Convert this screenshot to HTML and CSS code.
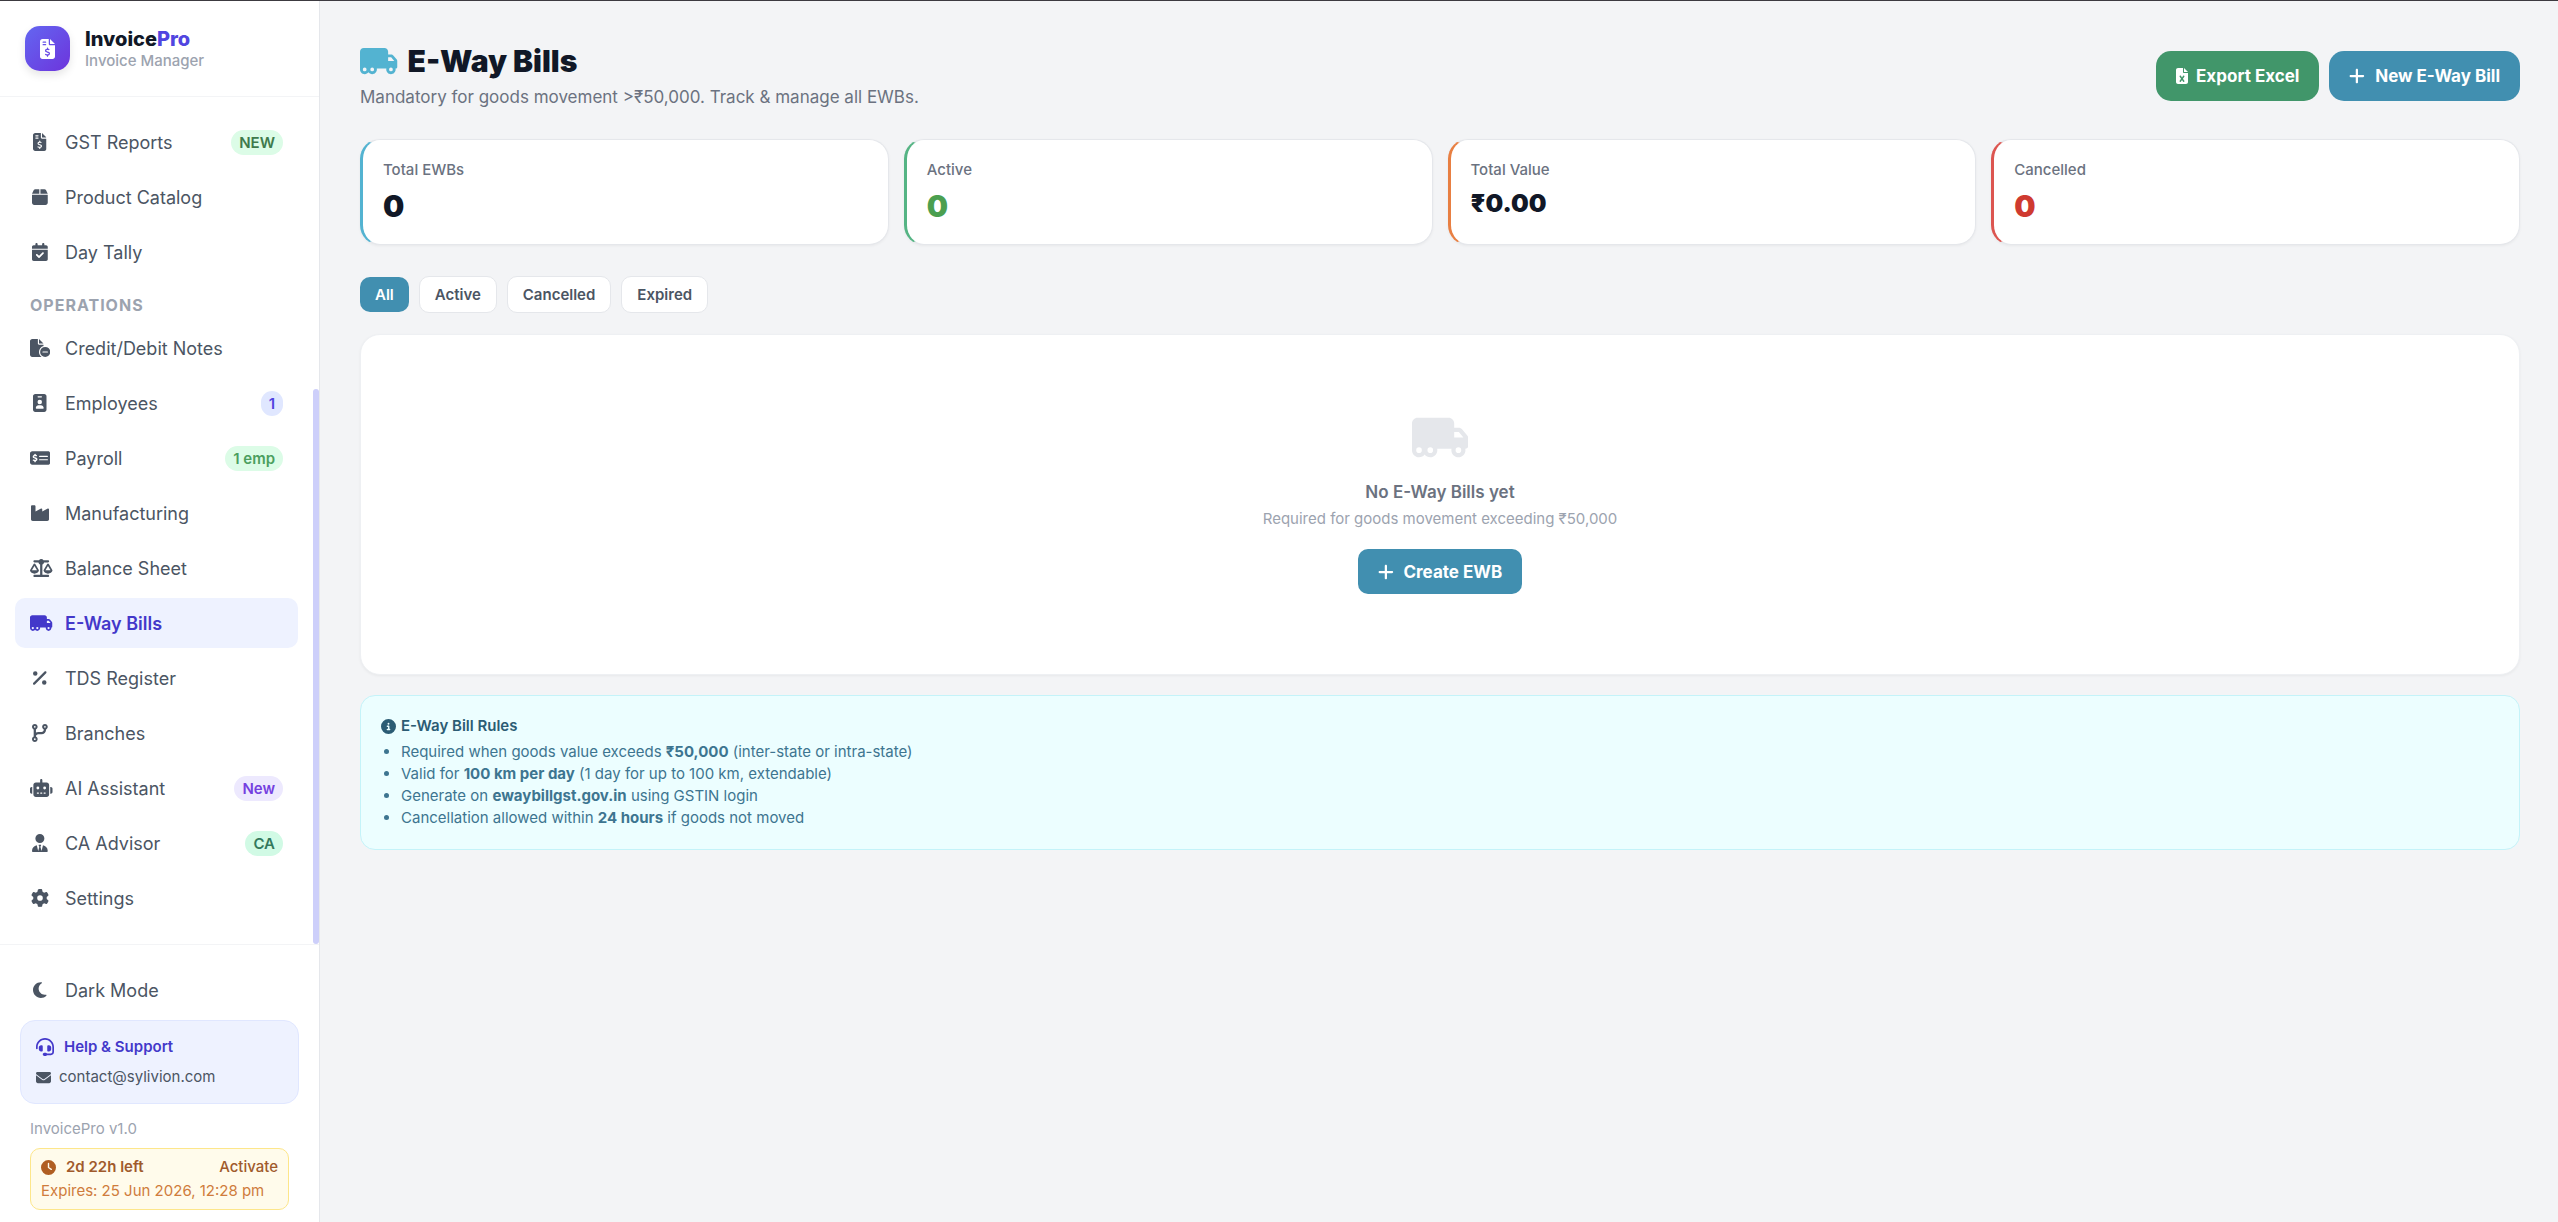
FILE: index.html
```html
<!DOCTYPE html>
<html lang="en">
<head>
    <meta charset="UTF-8">
    <meta name="viewport" content="width=device-width, initial-scale=1.0">
    <title>InvoicePro - E-Way Bills</title>
    <link rel="stylesheet" href="styles.css">
</head>
<body>
    <!-- Shared icons -->
    <svg class="sprite" aria-hidden="true">
        <symbol id="truck" viewBox="0 0 640 512"><path d="M64 32C28.7 32 0 60.7 0 96V304v80 16c0 44.2 35.8 80 80 80c26.2 0 49.4-12.6 64-32c14.6 19.4 37.8 32 64 32c44.2 0 80-35.8 80-80c0-5.5-.6-10.8-1.6-16H416h33.6c-1 5.2-1.6 10.5-1.6 16c0 44.2 35.8 80 80 80s80-35.8 80-80c0-5.5-.6-10.8-1.6-16H608c17.7 0 32-14.3 32-32V288 272 261.7c0-9.2-3.2-18.2-9-25.3l-58.8-71.8c-10.6-13-26.5-20.5-43.3-20.5H480V96c0-35.3-28.7-64-64-64H64zM585 256H480V192h48.8c2.4 0 4.7 1.1 6.2 2.9L585 256zM528 368a32 32 0 1 1 0 64 32 32 0 1 1 0-64zM176 400a32 32 0 1 1 64 0 32 32 0 1 1 -64 0zM80 368a32 32 0 1 1 0 64 32 32 0 1 1 0-64z"/></symbol>
        <symbol id="invoice" viewBox="0 0 384 512"><path d="M64 0C28.7 0 0 28.7 0 64V448c0 35.3 28.7 64 64 64H320c35.3 0 64-28.7 64-64V160H256c-17.7 0-32-14.3-32-32V0H64zM256 0V128H384L256 0zM64 80c0-8.8 7.2-16 16-16h64c8.8 0 16 7.2 16 16s-7.2 16-16 16H80c-8.8 0-16-7.2-16-16zm0 64c0-8.8 7.2-16 16-16h64c8.8 0 16 7.2 16 16s-7.2 16-16 16H80c-8.8 0-16-7.2-16-16zm128 72c8.8 0 16 7.2 16 16v17.3c8.5 1.2 16.7 3.1 24.1 5.1c8.5 2.3 13.6 11 11.3 19.6s-11 13.6-19.6 11.3c-11.1-3-22-5.2-32.1-5.3c-8.4-.1-17.4 1.8-23.6 5.5c-5.7 3.4-8.1 7.3-8.1 12.8c0 3.7 1.3 6.5 7.3 10.1c6.9 4.1 16.6 7.1 29.2 10.9l.5 .1c11.3 3.4 25.3 7.6 36.3 14.6c12.1 7.6 22.4 19.7 22.7 38.2c.3 19.3-9.6 33.3-22.9 41.6c-7.7 4.8-16.4 7.6-25.1 9.1V440c0 8.8-7.2 16-16 16s-16-7.2-16-16V422.2c-11.2-2.1-21.7-5.7-30.9-8.9c-2.1-.7-4.2-1.4-6.2-2.1c-8.4-2.8-12.9-11.9-10.1-20.2s11.9-12.9 20.2-10.1c2.5 .8 4.8 1.6 7.1 2.4c13.6 4.6 24.6 8.4 36.3 8.7c9.1 .3 17.9-1.7 23.7-5.3c5.1-3.2 7.9-7.3 7.8-14c-.1-4.6-1.8-7.8-7.7-11.6c-6.8-4.3-16.5-7.4-29-11.2l-1.6-.5c-11-3.3-24.3-7.3-34.8-13.7c-12-7.2-22.6-18.9-22.7-37.3c-.1-19.4 10.8-32.8 23.8-40.5c7.5-4.4 15.8-7.2 24.1-8.7V232c0-8.8 7.2-16 16-16z"/></symbol>
        <symbol id="plus" viewBox="0 0 448 512"><path d="M256 80c0-17.7-14.3-32-32-32s-32 14.3-32 32V224H48c-17.7 0-32 14.3-32 32s14.3 32 32 32H192V432c0 17.7 14.3 32 32 32s32-14.3 32-32V288H400c17.7 0 32-14.3 32-32s-14.3-32-32-32H256V80z"/></symbol>
    </svg>

    <div class="app">
        <aside class="sidebar">
            <div class="brand">
                <div class="brand-logo"><svg viewBox="0 0 384 512"><use href="#invoice"/></svg></div>
                <div>
                    <div class="brand-name">Invoice<span>Pro</span></div>
                    <div class="brand-sub">Invoice Manager</div>
                </div>
            </div>

            <nav class="nav">
                <a href="#" class="nav-item">
                    <span class="nav-icon"><svg viewBox="0 0 384 512"><use href="#invoice"/></svg></span>
                    GST Reports
                    <span class="badge badge-green-dark">NEW</span>
                </a>
                <a href="#" class="nav-item">
                    <span class="nav-icon"><svg viewBox="0 0 448 512"><path d="M50.7 58.5L0 160H208V32H93.7C75.5 32 58.9 42.3 50.7 58.5zM240 160H448L397.3 58.5C389.1 42.3 372.5 32 354.3 32H240V160zm208 32H0V416c0 35.3 28.7 64 64 64H384c35.3 0 64-28.7 64-64V192z"/></svg></span>
                    Product Catalog
                </a>
                <a href="#" class="nav-item">
                    <span class="nav-icon"><svg viewBox="0 0 448 512"><path d="M128 0c17.7 0 32 14.3 32 32V64H288V32c0-17.7 14.3-32 32-32s32 14.3 32 32V64h48c26.5 0 48 21.5 48 48v48H0V112C0 85.5 21.5 64 48 64H96V32c0-17.7 14.3-32 32-32zM0 192H448V464c0 26.5-21.5 48-48 48H48c-26.5 0-48-21.5-48-48V192zM329 305c9.4-9.4 9.4-24.6 0-33.9s-24.6-9.4-33.9 0l-95 95-47-47c-9.4-9.4-24.6-9.4-33.9 0s-9.4 24.6 0 33.9l64 64c9.4 9.4 24.6 9.4 33.9 0L329 305z"/></svg></span>
                    Day Tally
                </a>

                <div class="nav-label">Operations</div>

                <a href="#" class="nav-item">
                    <span class="nav-icon"><svg viewBox="0 0 576 512"><path d="M0 64C0 28.7 28.7 0 64 0H224V128c0 17.7 14.3 32 32 32H384v38.6C310.1 219.5 256 287.4 256 368c0 59.1 29.1 111.3 73.7 143.3c-3.2 .5-6.4 .7-9.7 .7H64c-35.3 0-64-28.7-64-64V64zm384 64H256V0L384 128zM288 368a144 144 0 1 1 288 0 144 144 0 1 1 -288 0zm224 0c0-8.8-7.2-16-16-16H368c-8.8 0-16 7.2-16 16s7.2 16 16 16H496c8.8 0 16-7.2 16-16z"/></svg></span>
                    Credit/Debit Notes
                </a>
                <a href="#" class="nav-item">
                    <span class="nav-icon"><svg viewBox="0 0 384 512"><path d="M64 0C28.7 0 0 28.7 0 64V448c0 35.3 28.7 64 64 64H320c35.3 0 64-28.7 64-64V64c0-35.3-28.7-64-64-64H64zm96 320h64c44.2 0 80 35.8 80 80c0 8.8-7.2 16-16 16H96c-8.8 0-16-7.2-16-16c0-44.2 35.8-80 80-80zm-32-96a64 64 0 1 1 128 0 64 64 0 1 1 -128 0zM144 64h96c8.8 0 16 7.2 16 16s-7.2 16-16 16H144c-8.8 0-16-7.2-16-16s7.2-16 16-16z"/></svg></span>
                    Employees
                    <span class="badge badge-indigo">1</span>
                </a>
                <a href="#" class="nav-item">
                    <span class="nav-icon"><svg viewBox="0 0 576 512"><path d="M64 64C28.7 64 0 92.7 0 128V384c0 35.3 28.7 64 64 64H512c35.3 0 64-28.7 64-64V128c0-35.3-28.7-64-64-64H64zM272 192H496c8.8 0 16 7.2 16 16s-7.2 16-16 16H272c-8.8 0-16-7.2-16-16s7.2-16 16-16zM256 304c0-8.8 7.2-16 16-16H496c8.8 0 16 7.2 16 16s-7.2 16-16 16H272c-8.8 0-16-7.2-16-16zM164 152v13.9c7.5 1.2 14.6 2.9 21.1 4.7c10.7 2.8 17 13.8 14.2 24.5s-13.8 17-24.5 14.2c-11-2.9-21.6-5-31.2-5.2c-7.9-.1-16 1.8-21.5 5c-4.8 2.8-6.2 5.6-6.2 9.3c0 1.8 .1 3.5 5.3 6.7c6.3 3.8 15.5 6.7 28.3 10.5l.7 .2c11.2 3.4 25.6 7.7 37.1 15c12.9 8.1 24.3 21.3 24.6 41.6c.3 20.9-10.5 36.1-24.8 45c-7.2 4.5-15.2 7.3-23.2 9V360c0 11-9 20-20 20s-20-9-20-20V345.4c-10.3-2.2-20-5.5-28.2-8.4c-2.1-.7-4.1-1.4-6.1-2.1c-10.5-3.5-16.1-14.8-12.6-25.3s14.8-16.1 25.3-12.6c2.5 .8 4.9 1.7 7.2 2.4c13.6 4.6 24 8.1 35.1 8.5c8.6 .3 16.5-1.6 21.4-4.7c4.1-2.5 6-5.5 5.9-10.5c0-2.9-.8-5-5.9-8.2c-6.3-4-15.4-6.9-28-10.7l-1.7-.5c-10.9-3.3-24.6-7.4-35.6-14c-12.7-7.7-24.6-20.5-24.7-40.7c-.1-21.1 11.8-35.7 25.8-43.9c6.9-4.1 14.5-6.8 22.2-8.5V152c0-11 9-20 20-20s20 9 20 20z"/></svg></span>
                    Payroll
                    <span class="badge badge-green">1 emp</span>
                </a>
                <a href="#" class="nav-item">
                    <span class="nav-icon"><svg viewBox="0 0 512 512"><path d="M32 32C14.3 32 0 46.3 0 64V304v48 80c0 26.5 21.5 48 48 48H464c26.5 0 48-21.5 48-48V304 152.2c0-18.2-19.4-29.7-35.4-21.1L320 215.4V152.2c0-18.2-19.4-29.7-35.4-21.1L128 215.4V64c0-17.7-14.3-32-32-32H32z"/></svg></span>
                    Manufacturing
                </a>
                <a href="#" class="nav-item">
                    <span class="nav-icon"><svg viewBox="0 0 640 512"><path d="M384 32H512c17.7 0 32 14.3 32 32s-14.3 32-32 32H398.4c-5.2 25.8-22.9 47.1-46.4 57.3V448H512c17.7 0 32 14.3 32 32s-14.3 32-32 32H320 128c-17.7 0-32-14.3-32-32s14.3-32 32-32H288V153.3c-23.5-10.3-41.2-31.6-46.4-57.3H128c-17.7 0-32-14.3-32-32s14.3-32 32-32H256c14.6-19.4 37.8-32 64-32s49.4 12.6 64 32zm55.6 288H584.4L512 195.8 439.6 320zM512 416c-62.9 0-115.2-34-126-78.9c-2.6-11 1-22.3 6.7-32.1l95.2-163.2c5-8.6 14.2-13.8 24.1-13.8s19.1 5.3 24.1 13.8l95.2 163.2c5.7 9.8 9.3 21.1 6.7 32.1C627.2 382 574.9 416 512 416zM126.8 195.8L54.4 320H199.3L126.8 195.8zM.9 337.1c-2.6-11 1-22.3 6.7-32.1l95.2-163.2c5-8.6 14.2-13.8 24.1-13.8s19.1 5.3 24.1 13.8l95.2 163.2c5.7 9.8 9.3 21.1 6.7 32.1C242 382 189.7 416 126.8 416S11.7 382 .9 337.1z"/></svg></span>
                    Balance Sheet
                </a>
                <a href="#" class="nav-item active">
                    <span class="nav-icon"><svg viewBox="0 0 640 512"><use href="#truck"/></svg></span>
                    E-Way Bills
                </a>
                <a href="#" class="nav-item">
                    <span class="nav-icon"><svg viewBox="0 0 384 512"><path d="M374.6 118.6c12.5-12.5 12.5-32.8 0-45.3s-32.8-12.5-45.3 0l-320 320c-12.5 12.5-12.5 32.8 0 45.3s32.8 12.5 45.3 0l320-320zM128 128A64 64 0 1 0 0 128a64 64 0 1 0 128 0zM384 384a64 64 0 1 0 -128 0 64 64 0 1 0 128 0z"/></svg></span>
                    TDS Register
                </a>
                <a href="#" class="nav-item">
                    <span class="nav-icon"><svg viewBox="0 0 448 512"><path d="M80 104a24 24 0 1 0 0-48 24 24 0 1 0 0 48zm80-24c0 32.8-19.7 61-48 73.3v87.8c18.8-10.9 40.7-17.1 64-17.1h96c35.3 0 64-28.7 64-64v-6.7C307.7 141 288 112.8 288 80c0-44.2 35.8-80 80-80s80 35.8 80 80c0 32.8-19.7 61-48 73.3V160c0 70.7-57.3 128-128 128H176c-35.3 0-64 28.7-64 64v6.7c28.3 12.3 48 40.5 48 73.3c0 44.2-35.8 80-80 80s-80-35.8-80-80c0-32.8 19.7-61 48-73.3V352 153.3C19.7 141 0 112.8 0 80C0 35.8 35.8 0 80 0s80 35.8 80 80zm232 0a24 24 0 1 0 -48 0 24 24 0 1 0 48 0zM80 456a24 24 0 1 0 0-48 24 24 0 1 0 0 48z"/></svg></span>
                    Branches
                </a>
                <a href="#" class="nav-item">
                    <span class="nav-icon"><svg viewBox="0 0 640 512"><path d="M320 0c17.7 0 32 14.3 32 32V96H472c39.8 0 72 32.2 72 72V440c0 39.8-32.2 72-72 72H168c-39.8 0-72-32.2-72-72V168c0-39.8 32.2-72 72-72H288V32c0-17.7 14.3-32 32-32zM208 384c-8.8 0-16 7.2-16 16s7.2 16 16 16h32c8.8 0 16-7.2 16-16s-7.2-16-16-16H208zm96 0c-8.8 0-16 7.2-16 16s7.2 16 16 16h32c8.8 0 16-7.2 16-16s-7.2-16-16-16H304zm96 0c-8.8 0-16 7.2-16 16s7.2 16 16 16h32c8.8 0 16-7.2 16-16s-7.2-16-16-16H400zM264 256a40 40 0 1 0 -80 0 40 40 0 1 0 80 0zm152 40a40 40 0 1 0 0-80 40 40 0 1 0 0 80zM48 224H64V416H48c-26.5 0-48-21.5-48-48V272c0-26.5 21.5-48 48-48zm544 0c26.5 0 48 21.5 48 48v96c0 26.5-21.5 48-48 48H576V224h16z"/></svg></span>
                    AI Assistant
                    <span class="badge badge-purple">New</span>
                </a>
                <a href="#" class="nav-item">
                    <span class="nav-icon"><svg viewBox="0 0 448 512"><path d="M224 256A128 128 0 1 0 224 0a128 128 0 1 0 0 256zM209.1 359.2l-18.6-31c-6.4-10.7 1.3-24.2 13.7-24.2H224h19.7c12.4 0 20.1 13.6 13.7 24.2l-18.6 31 33.4 123.9 39.5-161.2c77.2 12 136.3 78.8 136.3 159.4c0 17-13.8 30.7-30.7 30.7H265.1 182.9 30.7C13.8 512 0 498.2 0 481.3c0-80.6 59.1-147.4 136.3-159.4l39.5 161.2 33.4-123.9z"/></svg></span>
                    CA Advisor
                    <span class="badge badge-emerald">CA</span>
                </a>
                <a href="#" class="nav-item">
                    <span class="nav-icon"><svg viewBox="0 0 512 512"><path d="M495.9 166.6c3.2 8.7 .5 18.4-6.4 24.6l-43.3 39.4c1.1 8.3 1.7 16.8 1.7 25.4s-.6 17.1-1.7 25.4l43.3 39.4c6.9 6.2 9.6 15.9 6.4 24.6c-4.4 11.9-9.7 23.3-15.8 34.3l-4.7 8.1c-6.6 11-14 21.4-22.1 31.2c-5.9 7.2-15.7 9.6-24.5 6.8l-55.7-17.7c-13.4 10.3-28.2 18.9-44 25.4l-12.5 57.1c-2 9.1-9 16.3-18.2 17.8c-13.8 2.3-28 3.5-42.5 3.5s-28.7-1.2-42.5-3.5c-9.2-1.5-16.2-8.7-18.2-17.8l-12.5-57.1c-15.8-6.5-30.6-15.1-44-25.4L83.1 425.9c-8.8 2.8-18.6 .3-24.5-6.8c-8.1-9.8-15.5-20.2-22.1-31.2l-4.7-8.1c-6.1-11-11.4-22.4-15.8-34.3c-3.2-8.7-.5-18.4 6.4-24.6l43.3-39.4C64.6 273.1 64 264.6 64 256s.6-17.1 1.7-25.4L22.4 191.2c-6.9-6.2-9.6-15.9-6.4-24.6c4.4-11.9 9.7-23.3 15.8-34.3l4.7-8.1c6.6-11 14-21.4 22.1-31.2c5.9-7.2 15.7-9.6 24.5-6.8l55.7 17.7c13.4-10.3 28.2-18.9 44-25.4l12.5-57.1c2-9.1 9-16.3 18.2-17.8C227.3 1.2 241.5 0 256 0s28.7 1.2 42.5 3.5c9.2 1.5 16.2 8.7 18.2 17.8l12.5 57.1c15.8 6.5 30.6 15.1 44 25.4l55.7-17.7c8.8-2.8 18.6-.3 24.5 6.8c8.1 9.8 15.5 20.2 22.1 31.2l4.7 8.1c6.1 11 11.4 22.4 15.8 34.3zM256 336a80 80 0 1 0 0-160 80 80 0 1 0 0 160z"/></svg></span>
                    Settings
                </a>
                <div class="nav-scroll"></div>
            </nav>

            <div class="sidebar-footer">
                <button type="button" class="theme-toggle">
                    <span class="nav-icon"><svg viewBox="0 0 384 512"><path d="M223.5 32C100 32 0 132.3 0 256S100 480 223.5 480c60.6 0 115.5-24.2 155.8-63.4c5-4.9 6.3-12.5 3.1-18.7s-10.1-9.7-17-8.5c-9.8 1.7-19.8 2.6-30.1 2.6c-96.9 0-175.5-78.8-175.5-176c0-65.8 36-123.1 89.3-153.3c6.1-3.5 9.2-10.5 7.7-17.3s-7.3-11.9-14.3-12.5c-6.3-.5-12.6-.8-19-.8z"/></svg></span>
                    Dark Mode
                </button>
                <div class="help">
                    <div class="help-title">
                        <svg viewBox="0 0 512 512"><path d="M256 48C141.1 48 48 141.1 48 256v40c0 13.3-10.7 24-24 24s-24-10.7-24-24V256C0 114.6 114.6 0 256 0S512 114.6 512 256V400.1c0 48.6-39.4 88-88.1 88L313.6 488c-8.3 14.3-23.8 24-41.6 24H240c-26.5 0-48-21.5-48-48s21.5-48 48-48h32c17.8 0 33.3 9.7 41.6 24l110.4 .1c22.1 0 40-17.9 40-40V256c0-114.9-93.1-208-208-208zM144 208h16c17.7 0 32 14.3 32 32V352c0 17.7-14.3 32-32 32H144c-35.3 0-64-28.7-64-64V272c0-35.3 28.7-64 64-64zm224 0c35.3 0 64 28.7 64 64v48c0 35.3-28.7 64-64 64H352c-17.7 0-32-14.3-32-32V240c0-17.7 14.3-32 32-32h16z"/></svg>
                        Help &amp; Support
                    </div>
                    <a href="mailto:contact@sylivion.com" class="help-mail">
                        <svg viewBox="0 0 512 512"><path d="M48 64C21.5 64 0 85.5 0 112c0 15.1 7.1 29.3 19.2 38.4L236.8 313.6c11.4 8.5 27 8.5 38.4 0L492.8 150.4c12.1-9.1 19.2-23.3 19.2-38.4c0-26.5-21.5-48-48-48H48zM0 176V384c0 35.3 28.7 64 64 64H448c35.3 0 64-28.7 64-64V176L294.4 339.2c-22.8 17.1-54 17.1-76.8 0L0 176z"/></svg>
                        contact@sylivion.com
                    </a>
                </div>
                <div class="meta">
                    <div class="version">InvoicePro v1.0</div>
                    <div class="license">
                        <div class="license-row">
                            <svg viewBox="0 0 512 512"><path d="M256 0a256 256 0 1 1 0 512A256 256 0 1 1 256 0zM232 120V256c0 8 4 15.5 10.7 20l96 64c11 7.4 25.9 4.4 33.3-6.7s4.4-25.9-6.7-33.3L280 243.2V120c0-13.3-10.7-24-24-24s-24 10.7-24 24z"/></svg>
                            <strong>2d 22h left</strong>
                            <a href="#">Activate</a>
                        </div>
                        <div class="license-date">Expires: 25 Jun 2026, 12:28 pm</div>
                    </div>
                </div>
            </div>
        </aside>

        <main class="main">
            <header class="page-header">
                <div>
                    <h1><svg viewBox="0 0 640 512"><use href="#truck"/></svg>E-Way Bills</h1>
                    <p class="subtitle">Mandatory for goods movement &gt;₹50,000. Track &amp; manage all EWBs.</p>
                </div>
                <div class="actions">
                    <button type="button" class="btn btn-green">
                        <svg viewBox="0 0 384 512"><path d="M64 0C28.7 0 0 28.7 0 64V448c0 35.3 28.7 64 64 64H320c35.3 0 64-28.7 64-64V160H256c-17.7 0-32-14.3-32-32V0H64zM256 0V128H384L256 0zM155.7 250.2L192 302.1l36.3-51.9c7.6-10.9 22.6-13.5 33.4-5.9s13.5 22.6 5.9 33.4L221.3 344l46.4 66.2c7.6 10.9 5 25.8-5.9 33.4s-25.8 5-33.4-5.9L192 385.8l-36.3 51.9c-7.6 10.9-22.6 13.5-33.4 5.9s-13.5-22.6-5.9-33.4L162.7 344l-46.4-66.2c-7.6-10.9-5-25.8 5.9-33.4s25.8-5 33.4 5.9z"/></svg>
                        Export Excel
                    </button>
                    <button type="button" class="btn btn-blue"><svg viewBox="0 0 448 512"><use href="#plus"/></svg>New E-Way Bill</button>
                </div>
            </header>

            <section class="stats">
                <div class="stat stat-cyan">
                    <div class="stat-label">Total EWBs</div>
                    <div class="stat-value">0</div>
                </div>
                <div class="stat stat-green">
                    <div class="stat-label">Active</div>
                    <div class="stat-value">0</div>
                </div>
                <div class="stat stat-orange">
                    <div class="stat-label">Total Value</div>
                    <div class="stat-value amount">₹0.00</div>
                </div>
                <div class="stat stat-red">
                    <div class="stat-label">Cancelled</div>
                    <div class="stat-value">0</div>
                </div>
            </section>

            <div class="tabs">
                <button type="button" class="tab active">All</button>
                <button type="button" class="tab">Active</button>
                <button type="button" class="tab">Cancelled</button>
                <button type="button" class="tab">Expired</button>
            </div>

            <section class="empty">
                <svg class="empty-icon" viewBox="0 0 640 512"><use href="#truck"/></svg>
                <p class="empty-title">No E-Way Bills yet</p>
                <p class="empty-text">Required for goods movement exceeding ₹50,000</p>
                <button type="button" class="btn btn-blue btn-small"><svg viewBox="0 0 448 512"><use href="#plus"/></svg>Create EWB</button>
            </section>

            <section class="rules">
                <h2><svg viewBox="0 0 512 512"><path d="M256 512A256 256 0 1 0 256 0a256 256 0 1 0 0 512zM216 336h24V272H216c-13.3 0-24-10.7-24-24s10.7-24 24-24h48c13.3 0 24 10.7 24 24v88h8c13.3 0 24 10.7 24 24s-10.7 24-24 24H216c-13.3 0-24-10.7-24-24s10.7-24 24-24zm40-208a32 32 0 1 1 0 64 32 32 0 1 1 0-64z"/></svg>E-Way Bill Rules</h2>
                <ul>
                    <li>Required when goods value exceeds <strong>₹50,000</strong> (inter-state or intra-state)</li>
                    <li>Valid for <strong>100 km per day</strong> (1 day for up to 100 km, extendable)</li>
                    <li>Generate on <strong>ewaybillgst.gov.in</strong> using GSTIN login</li>
                    <li>Cancellation allowed within <strong>24 hours</strong> if goods not moved</li>
                </ul>
            </section>
        </main>
    </div>
</body>
</html>
```
FILE: styles.css
```css
* {
    box-sizing: border-box;
}

body {
    font-family: Inter, "Noto Sans", sans-serif;
    background-color: #f3f4f6;
    border-top: 1px solid #3c3a40;
    margin: 0;
    color: #111827;
}

h1,
h2,
p,
ul {
    margin: 0;
}

a {
    color: inherit;
    text-decoration: none;
}

button {
    font-family: inherit;
    border: none;
    cursor: pointer;
}

svg {
    fill: currentColor;
    flex: none;
}

.sprite {
    position: absolute;
    width: 0;
    height: 0;
}

.app {
    display: flex;
    min-height: calc(100vh - 1px);
}

/* Sidebar */
.sidebar {
    width: 320px;
    flex: none;
    display: flex;
    flex-direction: column;
    background-color: #ffffff;
    border-right: 1px solid #e5e7eb;
}

.brand {
    display: flex;
    align-items: center;
    gap: 15px;
    padding: 25px;
    border-bottom: 1px solid #f3f4f6;
}

.brand-logo {
    display: flex;
    align-items: center;
    justify-content: center;
    width: 45px;
    height: 45px;
    border-radius: 15px;
    background: linear-gradient(135deg, #6366f1, #6d34dc);
    box-shadow: 0 4px 8px rgba(0, 0, 0, 0.1);
    color: #ffffff;
}

.brand-logo svg {
    height: 20px;
}

.brand-name {
    font-size: 20px;
    font-weight: 800;
    line-height: 24px;
}

.brand-name span {
    color: #5145e0;
}

.brand-sub {
    font-size: 15px;
    font-weight: 500;
    line-height: 20px;
    color: #9ca3af;
}

.nav {
    position: relative;
    flex: 1;
    display: flex;
    flex-direction: column;
    gap: 5px;
    padding: 20px 21px 20px 15px;
}

.nav-item,
.theme-toggle {
    display: flex;
    align-items: center;
    gap: 15px;
    height: 50px;
    padding: 0 15px;
    border-radius: 10px;
    font-size: 18px;
    color: #4b5563;
}

.nav-item.active {
    background-color: #eef2ff;
    color: #4338ca;
    font-weight: 600;
}

.nav-icon {
    width: 20px;
    text-align: center;
    line-height: 0;
    white-space: nowrap;
}

.nav-icon svg {
    height: 18px;
}

.nav-label {
    padding: 12px 15px 2px;
    font-size: 16px;
    font-weight: 700;
    line-height: 22px;
    letter-spacing: 1px;
    text-transform: uppercase;
    color: #9ca3af;
}

.badge {
    margin-left: auto;
    padding: 0 8px;
    border-radius: 13px;
    font-size: 15px;
    font-weight: 600;
    line-height: 25px;
}

.badge-green-dark {
    background-color: #dcfce7;
    color: #3f7a4c;
}

.badge-green {
    background-color: #dcfce7;
    color: #4b9f5f;
}

.badge-indigo {
    background-color: #e0e7ff;
    color: #5145e0;
}

.badge-purple {
    background-color: #ede9fe;
    color: #7440e0;
}

.badge-emerald {
    background-color: #d1fae5;
    color: #33785c;
}

/* Scroll thumb over the right edge of the menu */
.nav-scroll {
    position: absolute;
    top: 292px;
    right: 0;
    bottom: 0;
    width: 6px;
    border-radius: 3px;
    background-color: #cdcffa;
}

.sidebar-footer {
    padding: 20px 20px 12px;
    border-top: 1px solid #f3f4f6;
}

.theme-toggle {
    width: 100%;
    padding: 0 10px;
    background: none;
}

.help {
    display: flex;
    flex-direction: column;
    gap: 8px;
    margin-top: 5px;
    padding: 15px;
    border: 1px solid #e0e7ff;
    border-radius: 15px;
    background-color: #eef2ff;
    font-size: 15px;
    line-height: 22px;
}

.help-title,
.help-mail {
    display: flex;
    align-items: center;
}

.help-title {
    gap: 10px;
    font-weight: 600;
    color: #4338ca;
}

.help-title svg {
    height: 18px;
}

.help-mail {
    gap: 8px;
    color: #4b5563;
}

.help-mail svg {
    height: 15px;
}

.meta {
    padding: 13px 10px 0;
}

.version {
    margin-bottom: 7px;
    font-size: 15px;
    line-height: 24px;
    color: #9ca3af;
}

.license {
    padding: 6px 10px;
    border: 1px solid #fde68a;
    border-radius: 10px;
    background-color: #fffbeb;
    font-size: 15px;
    line-height: 24px;
    color: #cf7c3c;
}

.license-row {
    display: flex;
    align-items: center;
    gap: 10px;
    color: #a05a2c;
}

.license-row svg {
    height: 15px;
    color: #b05e22;
}

.license-row strong {
    font-weight: 600;
}

.license-row a {
    margin-left: auto;
    font-weight: 500;
}

/* Page */
.main {
    flex: 1;
    padding: 40px 38px 40px 40px;
}

.page-header {
    display: flex;
    align-items: center;
    justify-content: space-between;
    margin-bottom: 29px;
}

h1 {
    display: flex;
    align-items: center;
    gap: 10px;
    margin-bottom: 3px;
    font-size: 30px;
    font-weight: 900;
    line-height: 40px;
}

h1 svg {
    height: 30px;
    color: #53b3d1;
}

.subtitle {
    font-size: 17px;
    line-height: 26px;
    color: #6b7280;
}

.actions {
    display: flex;
    gap: 10px;
}

.btn {
    display: inline-flex;
    align-items: center;
    height: 50px;
    padding: 0 20px;
    border-radius: 15px;
    font-size: 17px;
    font-weight: 700;
    color: #ffffff;
}

.btn-green {
    gap: 8px;
    background-color: #41966a;
}

.btn-blue {
    gap: 10px;
    background-color: #418fb0;
}

.btn svg {
    height: 16px;
}

.btn-blue svg {
    height: 18px;
}

.btn-small {
    height: 45px;
    border-radius: 10px;
}

.stats {
    display: grid;
    grid-template-columns: repeat(4, 1fr);
    gap: 15px;
}

.stat {
    padding: 20px;
    border: 1px solid #e5e7eb;
    border-left-width: 3px;
    border-radius: 20px;
    background-color: #ffffff;
    box-shadow: 0 1px 3px rgba(0, 0, 0, 0.05);
}

.stat-label {
    margin-bottom: 8px;
    font-size: 15px;
    font-weight: 500;
    line-height: 20px;
    color: #6b7280;
}

.stat-value {
    font-size: 30px;
    font-weight: 900;
    line-height: 36px;
}

.stat-value.amount {
    font-size: 25px;
    line-height: 30px;
}

.stat-cyan {
    border-left-color: #53b3d1;
}

.stat-green {
    border-left-color: #55b484;
}

.stat-orange {
    border-left-color: #e87f42;
}

.stat-red {
    border-left-color: #dc5550;
}

.stat-green .stat-value {
    color: #4b9f50;
}

.stat-red .stat-value {
    color: #cf3a30;
}

.tabs {
    display: flex;
    align-items: center;
    gap: 10px;
    margin: 31px 0 21px;
}

.tab {
    padding: 0 15px;
    border: 1px solid #e5e7eb;
    border-radius: 10px;
    background-color: #ffffff;
    font-size: 15px;
    font-weight: 600;
    line-height: 35px;
    color: #4b5563;
}

.tab.active {
    border: none;
    background-color: #418fb0;
    color: #ffffff;
}

.empty {
    display: flex;
    flex-direction: column;
    align-items: center;
    padding: 80px 20px;
    border: 1px solid #eef0f3;
    border-radius: 20px;
    background-color: #ffffff;
    box-shadow: 0 1px 3px rgba(0, 0, 0, 0.05);
}

.empty-icon {
    height: 45px;
    color: #e5e7eb;
}

.empty-title {
    margin-top: 18px;
    font-size: 17px;
    font-weight: 600;
    line-height: 28px;
    color: #6b7280;
}

.empty-text {
    margin: 1px 0 18px;
    font-size: 15px;
    line-height: 24px;
    color: #9ca3af;
}

.rules {
    margin-top: 20px;
    padding: 20px;
    border: 1px solid #c4f3f9;
    border-radius: 15px;
    background-color: #ecfeff;
    font-size: 15px;
    color: #3d7590;
}

.rules h2 {
    display: flex;
    align-items: center;
    gap: 5px;
    margin-bottom: 5px;
    font-size: 15px;
    font-weight: 600;
    line-height: 20px;
    color: #2b5c74;
}

.rules h2 svg {
    height: 15px;
}

.rules ul {
    padding-left: 20px;
    line-height: 22px;
}

.rules strong {
    font-weight: 700;
}
```
